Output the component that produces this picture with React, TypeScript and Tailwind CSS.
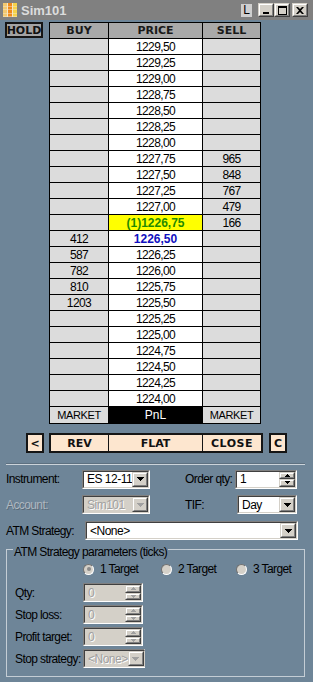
import clsx from 'clsx';

const prices = [
  '1229,50', '1229,25', '1229,00', '1228,75', '1228,50', '1228,25', '1228,00',
  '1227,75', '1227,50', '1227,25', '1227,00', '1226,75', '1226,50', '1226,25',
  '1226,00', '1225,75', '1225,50', '1225,25', '1225,00', '1224,75', '1224,50',
  '1224,25', '1224,00',
];

const bids: Record<string, string> = {
  '1226,50': '412', '1226,25': '587', '1226,00': '782', '1225,75': '810', '1225,50': '1203',
};
const asks: Record<string, string> = {
  '1227,75': '965', '1227,50': '848', '1227,25': '767', '1227,00': '479', '1226,75': '166',
};

const bold = "font-['DejaVu_Sans',Verdana,sans-serif] font-bold text-[11px]";
const cell = 'h-[16px] border-r border-b border-black flex items-center justify-center';

// classic win9x raised / sunken frames
const raisedOuter = 'border border-t-[#d4d0c8] border-l-[#d4d0c8] border-r-[#404040] border-b-[#404040]';
const raisedInner = 'border border-t-white border-l-white border-r-[#808080] border-b-[#808080] bg-[#d4d0c8]';
const sunkenOuter = 'border border-t-[#808080] border-l-[#808080] border-r-white border-b-white';
const sunkenInner = 'border border-t-[#404040] border-l-[#404040] border-r-[#d4d0c8] border-b-[#d4d0c8]';

function DownArrow({ color = '#000' }: { color?: string }) {
  return (
    <svg width="7" height="4" viewBox="0 0 7 4">
      <path d="M0 0h7v1h-1v1h-1v1h-1v1h-1v-1h-1v-1h-1v-1h-1z" fill={color} />
    </svg>
  );
}

function SpinArrow({ up, color }: { up?: boolean; color: string }) {
  return (
    <svg width="5" height="3" viewBox="0 0 5 3">
      {up ? (
        <path d="M2 0h1v1h1v1h1v1h-5v-1h1v-1h1z" fill={color} />
      ) : (
        <path d="M0 0h5v1h-1v1h-1v1h-1v-1h-1v-1h-1z" fill={color} />
      )}
    </svg>
  );
}

function Raised({ className, children }: { className?: string; children?: React.ReactNode }) {
  return (
    <div className={clsx(raisedOuter, className)}>
      <div className={clsx(raisedInner, 'w-full h-full flex items-center justify-center')}>{children}</div>
    </div>
  );
}

function FieldText({ text, disabled }: { text: string; disabled?: boolean }) {
  return (
    <span
      className={clsx(
        'flex-1 min-w-0 pl-[3px] flex items-center leading-none whitespace-nowrap overflow-hidden text-[12px] tracking-[-0.5px]',
        disabled ? 'text-[#a0a0a0] [text-shadow:1px_1px_0_#fff]' : 'text-black',
      )}
    >
      {text}
    </span>
  );
}

function Combo({ width, text, disabled }: { width: string; text: string; disabled?: boolean }) {
  return (
    <div className={clsx(sunkenOuter, 'h-[19px] flex', width)}>
      <div className={clsx(sunkenInner, 'flex-1 flex items-stretch', disabled ? 'bg-[#d4d0c8]' : 'bg-white')}>
        <FieldText text={text} disabled={disabled} />
        <Raised className="w-[16px] shrink-0">
          <DownArrow color={disabled ? '#a0a0a0' : '#000'} />
        </Raised>
      </div>
    </div>
  );
}

function Spin({ width, text, disabled }: { width: string; text: string; disabled?: boolean }) {
  const c = disabled ? '#a0a0a0' : '#000';
  return (
    <div className={clsx(sunkenOuter, 'h-[19px] flex', width)}>
      <div className={clsx(sunkenInner, 'flex-1 flex items-stretch', disabled ? 'bg-[#d4d0c8]' : 'bg-white')}>
        <FieldText text={text} disabled={disabled} />
        <div className="w-[16px] shrink-0 flex flex-col">
          <Raised className="h-1/2">
            <SpinArrow up color={c} />
          </Raised>
          <Raised className="h-1/2">
            <SpinArrow color={c} />
          </Raised>
        </div>
      </div>
    </div>
  );
}

function Radio({ checked }: { checked?: boolean }) {
  return (
    <div className="w-[11px] h-[11px] rounded-full border border-t-[#707070] border-l-[#707070] border-r-white border-b-white bg-[#d4d0c8] flex items-center justify-center">
      {checked && <div className="w-[4px] h-[4px] rounded-full bg-[#8a8a8a]" />}
    </div>
  );
}

function AppIcon() {
  return (
    <svg width="14" height="14" viewBox="0 0 14 14">
      <rect width="14" height="14" fill="#f4e6c8" />
      {[0, 1, 2, 3].map((r) => (
        <g key={r}>
          <rect x="0" y={r * 3.5} width="4" height="3" fill="#f2c870" />
          <rect x="5" y={r * 3.5} width="4" height="3" fill="#f08a1c" />
          <rect x="10" y={r * 3.5} width="4" height="3" fill="#f6d24a" />
        </g>
      ))}
    </svg>
  );
}

export default function App() {
  const label = 'text-[12px] tracking-[-0.6px] leading-none whitespace-nowrap';

  return (
    <div className="w-[313px] h-[682px] overflow-hidden bg-[#6e8598] flex flex-col font-['Liberation_Sans',Arial,sans-serif] text-[12px] text-black">
      {/* title bar */}
      <div className="h-[20px] bg-[#808080] flex items-center">
        <div className="ml-[3px]">
          <AppIcon />
        </div>
        <span className="ml-[4px] font-bold text-[13px] text-[#dcdcdc] leading-none">Sim101</span>
        <div className="flex-1" />
        <div className="w-[11px] h-[13px] bg-[#cfcfcf] flex items-center justify-center text-[12px] leading-none text-black">
          L
        </div>
        <Raised className="ml-[6px] w-[16px] h-[14px]">
          <svg width="8" height="7" viewBox="0 0 8 7">
            <rect x="1" y="5" width="6" height="2" fill="#000" />
          </svg>
        </Raised>
        <Raised className="w-[16px] h-[14px]">
          <svg width="9" height="9" viewBox="0 0 9 9">
            <path d="M0 0h9v9h-9zM1 2v6h7v-6z" fill="#000" fillRule="evenodd" />
          </svg>
        </Raised>
        <Raised className="ml-[2px] mr-[5px] w-[16px] h-[14px]">
          <svg width="8" height="7" viewBox="0 0 8 7">
            <path d="M0 0h2l2 2 2-2h2l-3 3.5 3 3.5h-2l-2-2-2 2h-2l3-3.5z" fill="#000" />
          </svg>
        </Raised>
      </div>

      {/* ladder */}
      <div className="flex mt-[2px]">
        <div
          className={clsx(
            bold,
            'ml-[5px] w-[38px] h-[16px] border-2 border-[#161616] bg-[#a4a4a4] text-[#111] flex items-center justify-center leading-none',
          )}
        >
          HOLD
        </div>
        <div className="ml-[6px] border-l border-t border-black grid grid-cols-[59px_94px_58px]">
          {['BUY', 'PRICE', 'SELL'].map((h) => (
            <div key={h} className={clsx(cell, bold, 'bg-[#a9a9a9] text-[#1a1a1a] leading-none')}>
              {h}
            </div>
          ))}
          {prices.map((p) => {
            const last = p === '1226,75';
            const bid = p === '1226,50';
            return (
              <div key={p} className="contents">
                <div className={clsx(cell, 'bg-[#dcdcdc] text-[12px] tracking-[-0.6px] leading-none')}>
                  {bids[p] ?? ''}
                </div>
                <div
                  className={clsx(
                    cell,
                    'text-[12px] leading-none',
                    last
                      ? 'bg-[#ffff00] text-[#1f8a00] font-bold'
                      : bid
                        ? 'bg-white text-[#1010c0] font-bold'
                        : 'bg-white text-black tracking-[-0.6px]',
                  )}
                >
                  {last ? '(1)' + p : p}
                </div>
                <div className={clsx(cell, 'bg-[#dcdcdc] text-[12px] tracking-[-0.6px] leading-none')}>
                  {asks[p] ?? ''}
                </div>
              </div>
            );
          })}
          <div className={clsx(cell, 'h-[17px] bg-[#dcdcdc] text-[11px] tracking-[-0.4px] leading-none')}>MARKET</div>
          <div className={clsx(cell, 'h-[17px] bg-black text-white text-[12px] leading-none')}>PnL</div>
          <div className={clsx(cell, 'h-[17px] bg-[#dcdcdc] text-[11px] tracking-[-0.4px] leading-none')}>MARKET</div>
        </div>
      </div>

      {/* action buttons */}
      <div className={clsx(bold, 'mt-[9px] flex h-[20px] text-[#111] leading-none')}>
        <div className="ml-[26px] w-[18px] border-2 border-[#151515] bg-[#fde6cf] flex items-center justify-center">
          &lt;
        </div>
        <div className="ml-[5px] flex border-2 border-[#151515] bg-[#fde6cf]">
          <div className="w-[58px] border-r border-[#151515] flex items-center justify-center">REV</div>
          <div className="w-[94px] border-r border-[#151515] flex items-center justify-center">FLAT</div>
          <div className="w-[58px] flex items-center justify-center tracking-[0.5px]">CLOSE</div>
        </div>
        <div className="ml-[6px] w-[18px] border-2 border-[#151515] bg-[#fde6cf] flex items-center justify-center">
          C
        </div>
      </div>

      {/* separator */}
      <div className="mt-[10px] ml-[6px] w-[299px] border-t border-b border-t-[#5d7080] border-b-[#cbd3da]" />

      {/* order form */}
      <div className="mt-[4px] h-[20px] flex items-center">
        <span className={clsx(label, 'w-[82px] pl-[6px] text-black')}>Instrument:</span>
        <Combo width="w-[68px]" text="ES 12-11" />
        <span className={clsx(label, 'ml-[35px] w-[50px] text-black')}>Order qty:</span>
        <Spin width="w-[62px]" text="1" />
      </div>
      <div className="mt-[6px] h-[19px] flex items-center">
        <span className={clsx(label, 'w-[82px] pl-[6px] text-[#aeb8c0] [text-shadow:1px_1px_0_#5a6b79]')}>
          Account:
        </span>
        <Combo width="w-[68px]" text="Sim101" disabled />
        <span className={clsx(label, 'ml-[35px] w-[52px] text-black')}>TIF:</span>
        <Combo width="w-[60px]" text="Day" />
      </div>
      <div className="mt-[7px] h-[19px] flex items-center">
        <span className={clsx(label, 'w-[85px] pl-[6px] text-black')}>ATM Strategy:</span>
        <Combo width="w-[213px]" text="<None>" />
      </div>

      {/* group box */}
      <div className="mt-[9px] ml-[6px] w-[299px] border border-[#c4cdd5] pb-[8px] flex flex-col">
        <div className="-mt-[7px] ml-[6px] px-[1px] w-fit h-[14px] bg-[#6e8598]">
          <span className={clsx(label, 'text-black')}>ATM Strategy parameters (ticks)</span>
        </div>
        <div className="mt-[5px] h-[14px] flex items-center">
          <div className="ml-[76px] w-[78px] flex items-center gap-[6px]">
            <Radio checked />
            <span className={clsx(label, 'text-black')}>1 Target</span>
          </div>
          <div className="w-[75px] flex items-center gap-[6px]">
            <Radio />
            <span className={clsx(label, 'text-black')}>2 Target</span>
          </div>
          <div className="flex items-center gap-[6px]">
            <Radio />
            <span className={clsx(label, 'text-black')}>3 Target</span>
          </div>
        </div>
        <div className="mt-[7px] flex flex-col gap-[3px]">
          {['Qty:', 'Stop loss:', 'Profit target:'].map((t) => (
            <div key={t} className="h-[19px] flex items-center">
              <span className={clsx(label, 'text-black w-[76px] pl-[8px]')}>{t}</span>
              <Spin width="w-[60px]" text="0" disabled />
            </div>
          ))}
          <div className="h-[19px] flex items-center">
            <span className={clsx(label, 'text-black w-[76px] pl-[8px]')}>Stop strategy:</span>
            <Combo width="w-[62px]" text="<None>" disabled />
          </div>
        </div>
      </div>
    </div>
  );
}
